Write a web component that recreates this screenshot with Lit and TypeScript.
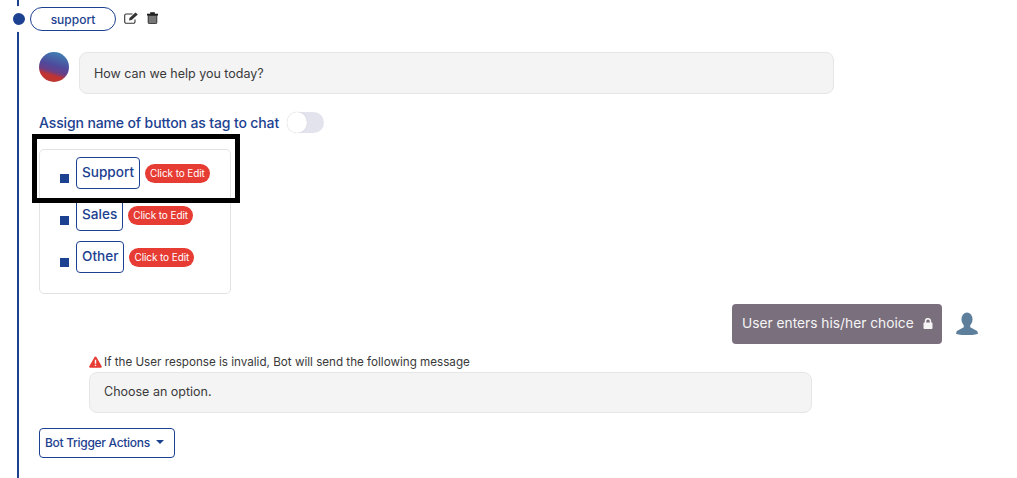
import { LitElement, html, css } from 'lit';
import { customElement } from 'lit/decorators.js';

const buttons = ['Support', 'Sales', 'Other'];

@customElement('app-root')
export class AppRoot extends LitElement {
  static styles = css`
    :host {
      display: block;
      width: 1017px;
      height: 478px;
      overflow: hidden;
      position: relative;
      background: #fff;
      font-family: 'Inter', 'Liberation Sans', sans-serif;
      color: #333;
    }
    .flow {
      margin-left: 17px;
      height: 478px;
      border-left: 2px solid #1c4190;
      box-sizing: border-box;
      padding: 7px 0 0 11px;
    }
    .head {
      display: flex;
      align-items: flex-start;
      position: relative;
    }
    .dot {
      position: absolute;
      left: -23px;
      top: -1px;
      width: 12px;
      height: 12px;
      border-radius: 50%;
      background: #1c4190;
      border: solid #fff;
      border-width: 7px 5px 7px 6px;
    }
    .pill {
      width: 86px;
      height: 24px;
      box-sizing: border-box;
      border: 1px solid #1c4190;
      border-radius: 12px;
      display: flex;
      align-items: center;
      justify-content: center;
      font-size: 12px;
      font-weight: 500;
      color: #1c4190;
    }
    .icons {
      display: flex;
      gap: 8px;
      margin: 5px 0 0 8px;
    }
    .bot-row {
      display: flex;
      gap: 10px;
      margin: 21px 0 0 9px;
    }
    .avatar {
      width: 30px;
      height: 30px;
      border-radius: 50%;
      background: linear-gradient(197deg, #3b8db8 0%, #4f4a9c 45%, #6a3f86 62%, #c2332f 74%, #b8392f 100%);
    }
    .bubble {
      box-sizing: border-box;
      background: #f4f4f5;
      border: 1px solid #e6e6e8;
      border-radius: 8px;
      display: flex;
      align-items: center;
      font-size: 12.5px;
      padding-left: 14px;
      color: #3a3a3a;
    }
    .bubble.ask {
      width: 755px;
      height: 42px;
    }
    .assign {
      display: flex;
      align-items: center;
      gap: 8px;
      margin: 16px 0 0 9px;
      height: 24px;
      font-size: 14px;
      font-weight: 500;
      letter-spacing: -0.13px;
      color: #1c4190;
    }
    .toggle {
      width: 37px;
      height: 21px;
      border-radius: 11px;
      background: #e3e3ee;
      position: relative;
    }
    .toggle::after {
      content: '';
      position: absolute;
      left: 0;
      top: 0;
      width: 20px;
      height: 21px;
      border-radius: 50%;
      background: #fff;
      box-shadow: 0 0 1px #bbb;
    }
    .card {
      box-sizing: border-box;
      width: 192px;
      height: 145px;
      margin: 15px 0 0 9px;
      border: 1px solid #e3e3e6;
      border-radius: 5px;
      padding: 7px 0 0 20px;
      display: flex;
      flex-direction: column;
      gap: 10px;
    }
    .opt {
      display: flex;
      align-items: center;
      height: 32px;
    }
    .square {
      width: 9px;
      height: 9px;
      background: #1c4190;
      margin: 11px 7px 0 0;
      flex: none;
    }
    .btn {
      box-sizing: border-box;
      height: 32px;
      padding: 0 5px 3px;
      display: flex;
      align-items: center;
      border: 1px solid #1c4190;
      border-radius: 4px;
      color: #1c4190;
      font-size: 13.6px;
      font-weight: 500;
    }
    .edit {
      margin-left: 5px;
      height: 19px;
      padding: 0 5px;
      border-radius: 10px;
      background: #e63c33;
      color: #fff;
      font-size: 10px;
      display: flex;
      align-items: center;
      letter-spacing: -0.1px;
    }
    .user-row {
      display: flex;
      justify-content: flex-end;
      align-items: center;
      gap: 13px;
      margin: 10px 0 0 0;
      padding-right: 38px;
    }
    .user-msg {
      box-sizing: border-box;
      width: 210px;
      height: 40px;
      border-radius: 4px;
      background: #7a6f7d;
      color: #f5f5f5;
      font-size: 13.75px;
      display: flex;
      align-items: center;
      justify-content: space-between;
      padding: 0 9px 2px 10px;
    }
    .invalid {
      margin: 10px 0 0 59px;
      width: 723px;
    }
    .warn {
      display: flex;
      align-items: center;
      gap: 2px;
      height: 16px;
      font-size: 11.65px;
      color: #3a3a3a;
    }
    .bubble.choose {
      height: 41px;
      margin-top: 2px;
      padding-bottom: 2px;
    }
    .actions {
      box-sizing: border-box;
      width: 136px;
      height: 30px;
      margin: 15px 0 0 9px;
      border: 1px solid #1c4190;
      border-radius: 4px;
      display: flex;
      align-items: center;
      padding: 0 0 2px 5px;
      gap: 6px;
      font-size: 12px;
      font-weight: 500;
      letter-spacing: -0.3px;
      color: #1c4190;
    }
    .caret {
      width: 0;
      height: 0;
      border-left: 4px solid transparent;
      border-right: 4px solid transparent;
      border-top: 4px solid #1c4190;
    }
    .highlight {
      position: absolute;
      left: 32px;
      top: 134px;
      width: 208px;
      height: 69px;
      box-sizing: border-box;
      border: 5px solid #000;
    }
  `;

  render() {
    return html`
      <div class="flow">
        <div class="head">
          <span class="dot"></span>
          <div class="pill">support</div>
          <div class="icons">
            <svg width="15" height="12" viewBox="0 0 15 12" fill="none" stroke="#333" stroke-width="1.1">
              <path d="M11 7.500v2.300a1.500 1.500 0 0 1-1.500 1.500H2.200A1.500 1.500 0 0 1 .7 9.800V3.500A1.500 1.500 0 0 1 2.200 2H8.500" />
              <path d="M5 8.500l.5-2.400L11.500.4l2.300 2.200-6.100 5.500z" fill="#333" stroke="none" />
            </svg>
            <svg width="11" height="12" viewBox="0 0 11 12">
              <path d="M0 2h11v1.200H0z M3.500 2V.5h4V2" fill="#222" stroke="#222" stroke-width=".6" />
              <path d="M1.200 3.400h8.600v7.100a1.200 1.200 0 0 1-1.200 1.200H2.400a1.200 1.200 0 0 1-1.200-1.200z" fill="#777" stroke="#222" stroke-width=".9" />
            </svg>
          </div>
        </div>
        <div class="bot-row">
          <div class="avatar"></div>
          <div class="bubble ask">How can we help you today?</div>
        </div>
        <div class="assign">Assign name of button as tag to chat <span class="toggle"></span></div>
        <div class="card">
          ${buttons.map(
            (b) => html`
              <div class="opt">
                <span class="square"></span>
                <span class="btn">${b}</span>
                <span class="edit">Click to Edit</span>
              </div>
            `
          )}
        </div>
        <div class="user-row">
          <div class="user-msg">
            User enters his/her choice
            <svg width="10" height="11" viewBox="0 0 10 11">
              <path d="M2.500 5V3.200a2.500 2.500 0 0 1 5 0V5" fill="none" stroke="#f5f5f5" stroke-width="1.500" />
              <rect x=".5" y="4.500" width="9" height="6.500" rx="1" fill="#f5f5f5" />
            </svg>
          </div>
          <svg width="24" height="26" viewBox="0 0 26 26" fill="#5d7f9c">
            <ellipse cx="13" cy="8" rx="6" ry="7.500" />
            <path d="M9.500 14h7v2.500l7.500 4 1 3c-3 2-21 2-24 0l1-3 7.500-4z" />
          </svg>
        </div>
        <div class="invalid">
          <div class="warn">
            <svg width="13" height="12" viewBox="0 0 13 12">
              <path d="M6.500.5a1 1 0 0 1 .9.500l5.300 9.300a1 1 0 0 1-.9 1.500H1.200a1 1 0 0 1-.9-1.500L5.600 1a1 1 0 0 1 .9-.500z" fill="#e63c33" />
              <path d="M5.800 3.800h1.400v4H5.800z M5.800 8.700h1.400V10H5.800z" fill="#fff" />
            </svg>
            If the User response is invalid, Bot will send the following message
          </div>
          <div class="bubble choose">Choose an option.</div>
        </div>
        <div class="actions">Bot Trigger Actions <span class="caret"></span></div>
      </div>
      <div class="highlight"></div>
    `;
  }
}
